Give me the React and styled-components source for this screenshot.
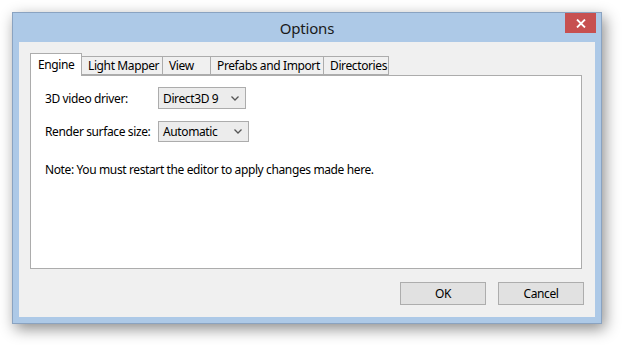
import React from 'react'
import styled, { createGlobalStyle } from 'styled-components'

const GlobalStyle = createGlobalStyle`
	html, body {
		margin: 0;
		padding: 0;
		background: #ffffff;
	}
	body {
		font-family: 'Noto Sans', 'Open Sans', 'Liberation Sans', sans-serif;
		font-size: 12px;
		letter-spacing: -0.38px;
		color: #000;
	}
`

const Page = styled.div`
	width: 622px;
	height: 345px;
	padding: 12px 0 0 12px;
	box-sizing: border-box;
`

const Window = styled.div`
	width: 590px;
	height: 312px;
	box-sizing: border-box;
	display: flex;
	flex-direction: column;
	background: #adc9e7;
	border: 1px solid #8aa3c1;
	padding: 0 6px 6px 6px;
	box-shadow: 3px 5px 14px rgba(0, 0, 0, 0.45);
`

const TitleBar = styled.div`
	height: 29px;
	display: grid;
	grid-template-columns: 1fr auto 1fr;
	align-items: center;
	flex-shrink: 0;
`

const Title = styled.div`
	grid-column: 2;
	font-size: 15px;
	letter-spacing: -0.2px;
	color: #1a1a1a;
	padding-top: 1px;
`

const CloseButton = styled.div`
	grid-column: 3;
	justify-self: end;
	align-self: start;
	width: 31px;
	height: 20px;
	margin-right: -1px;
	background: #c75050;
	display: flex;
	align-items: center;
	justify-content: center;
`

const Client = styled.div`
	flex: 1;
	background: #f0f0f0;
	display: flex;
	flex-direction: column;
	padding: 11px 13px 12px 11px;
	box-sizing: border-box;
`

const TabRow = styled.div`
	display: flex;
	align-items: flex-end;
	height: 22px;
	position: relative;
	z-index: 1;
`

const Tab = styled.div`
	width: ${(p) => p.w}px;
	height: ${(p) => (p.active ? 23 : 19)}px;
	box-sizing: border-box;
	border: 1px solid #acacac;
	border-left-width: ${(p) => (p.first || p.active ? 1 : 0)}px;
	border-bottom: ${(p) => (p.active ? 'none' : '1px solid #acacac')};
	margin-bottom: ${(p) => (p.active ? -1 : 0)}px;
	background: ${(p) => (p.active ? '#ffffff' : '#f0f0f0')};
	display: flex;
	align-items: center;
	padding: ${(p) => (p.active ? '0 0 2px 7px' : '0 0 0 6px')};
	white-space: nowrap;
	font-size: 12px;
`

const Panel = styled.div`
	height: 194px;
	box-sizing: border-box;
	background: #ffffff;
	border: 1px solid #acacac;
	padding: 11px 14px;
	display: flex;
	flex-direction: column;
`

const Form = styled.div`
	display: grid;
	grid-template-columns: 113px auto;
	row-gap: 12px;
	align-items: center;
	justify-items: start;
`

const Label = styled.div`
	font-size: 12px;
`

const Combo = styled.div`
	width: ${(p) => p.w}px;
	height: ${(p) => p.h}px;
	box-sizing: border-box;
	border: 1px solid #acacac;
	background: #ececec;
	display: flex;
	align-items: center;
	justify-content: space-between;
	padding: 0 6px 0 4px;
	font-size: 12px;
`

const Note = styled.div`
	margin-top: 19px;
	font-size: 12px;
`

const ButtonRow = styled.div`
	display: flex;
	justify-content: flex-end;
	gap: 12px;
	margin-top: 13px;
	margin-right: -2px;
`

const Button = styled.div`
	width: 86px;
	height: 23px;
	box-sizing: border-box;
	border: 1px solid #adadad;
	background: #e1e1e1;
	display: flex;
	align-items: center;
	justify-content: center;
	font-size: 12px;
`

const Chevron = () => (
	<svg width="8" height="5" viewBox="0 0 8 5">
		<path d="M0.5 0.5 L4 4 L7.5 0.5" fill="none" stroke="#555" strokeWidth="1.3" />
	</svg>
)

const tabs = [
	{ label: 'Engine', w: 52, active: true },
	{ label: 'Light Mapper', w: 81 },
	{ label: 'View', w: 48 },
	{ label: 'Prefabs and Import', w: 113 },
	{ label: 'Directories', w: 65 },
]

const App = () => {
	return (
		<Page>
			<GlobalStyle />
			<Window>
				<TitleBar>
					<Title>Options</Title>
					<CloseButton>
						<svg width="10" height="9" viewBox="0 0 10 9">
							<path d="M1 0.5 L9 8.5 M9 0.5 L1 8.5" stroke="#fff" strokeWidth="1.8" />
						</svg>
					</CloseButton>
				</TitleBar>
				<Client>
					<TabRow>
						{tabs.map((t, i) => (
							<Tab key={t.label} w={t.w} active={t.active} first={i === 0}>
								{t.label}
							</Tab>
						))}
					</TabRow>
					<Panel>
						<Form>
							<Label>3D video driver:</Label>
							<Combo w={88} h={22}>
								<span>Direct3D 9</span>
								<Chevron />
							</Combo>
							<Label>Render surface size:</Label>
							<Combo w={91} h={21}>
								<span>Automatic</span>
								<Chevron />
							</Combo>
						</Form>
						<Note>Note: You must restart the editor to apply changes made here.</Note>
					</Panel>
					<ButtonRow>
						<Button>OK</Button>
						<Button>Cancel</Button>
					</ButtonRow>
				</Client>
			</Window>
		</Page>
	)
}

export default App
